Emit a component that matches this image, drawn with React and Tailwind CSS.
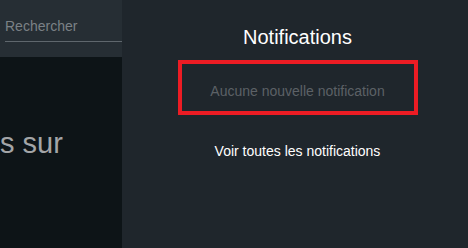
import React from 'react';

// --- Left column: search bar and page content ---
const SidePanel = () => (
  <div className="w-[122px] shrink-0 flex flex-col overflow-hidden">
    <div className="h-[57px] bg-[#262e34] px-[5px] pt-[14px]">
      <input
        className="w-[117px] bg-transparent border-b border-[#5f676d] text-[14px] text-[#c8cccf] placeholder:text-[#7b8186] pb-[4px] outline-none"
        placeholder="Rechercher"
      />
    </div>
    <div className="flex-1 bg-[#0d1417] pt-[72px]">
      <p className="text-[29px] text-[#a3a5a7] leading-none whitespace-nowrap">s sur</p>
    </div>
  </div>
);

// --- Notifications dropdown panel ---
const NotificationPanel = () => (
  <div className="flex-1 bg-[#1f262c] flex flex-col items-center pt-[25px] pl-[5px]">
    <h2 className="text-[20px] text-white leading-[24px]">Notifications</h2>
    <div className="mt-[11px] w-[240px] h-[55px] border-4 border-[#ec1c24] flex items-center justify-center pt-[7px]">
      <span className="text-[14px] text-[#5c6166]">Aucune nouvelle notification</span>
    </div>
    <a className="mt-[26px] text-[14px] text-white cursor-pointer">Voir toutes les notifications</a>
  </div>
);

export default function App() {
  return (
    <div className="w-[468px] h-[248px] flex overflow-hidden font-['Liberation_Sans',Arial,sans-serif]">
      <SidePanel />
      <NotificationPanel />
    </div>
  );
}
